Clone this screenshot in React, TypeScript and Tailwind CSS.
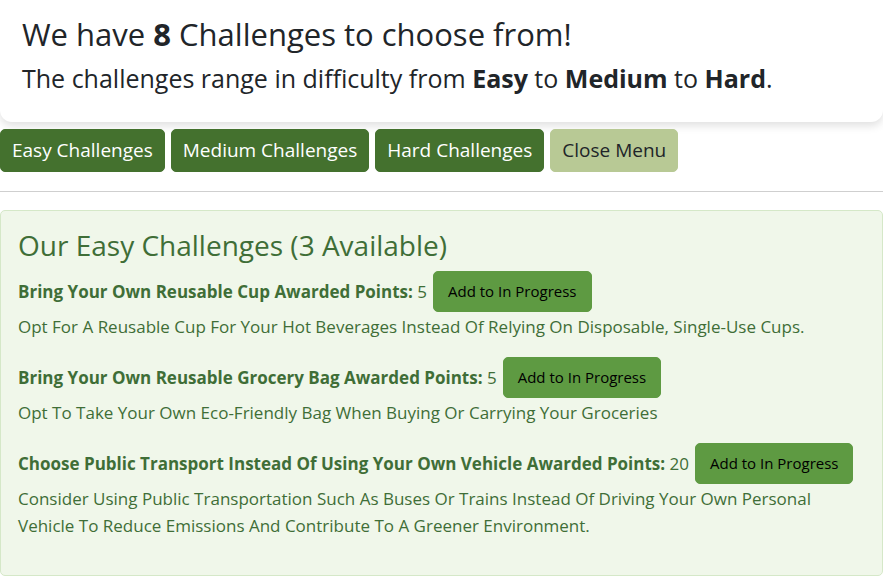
const challenges = [
  {
    title: "Bring Your Own Reusable Cup",
    points: 5,
    desc: "Opt For A Reusable Cup For Your Hot Beverages Instead Of Relying On Disposable, Single-Use Cups.",
  },
  {
    title: "Bring Your Own Reusable Grocery Bag",
    points: 5,
    desc: "Opt To Take Your Own Eco-Friendly Bag When Buying Or Carrying Your Groceries",
  },
  {
    title: "Choose Public Transport Instead Of Using Your Own Vehicle",
    points: 20,
    desc: "Consider Using Public Transportation Such As Buses Or Trains Instead Of Driving Your Own Personal Vehicle To Reduce Emissions And Contribute To A Greener Environment.",
  },
];

export default function App() {
  return (
    <div className="min-h-screen bg-white font-['Open_Sans',sans-serif] text-[#212529]">
      <div className="bg-white rounded-b-xl shadow-[0_4px_8px_rgba(0,0,0,0.12)] px-[22px] pt-[16px] pb-[29px]">
        <h2 className="text-[31px] leading-[37px] font-medium mb-[10px]">
          We have <b className="font-bold">8</b> Challenges to choose from!
        </h2>
        <h4 className="text-[25px] leading-[30px] font-medium">
          The challenges range in difficulty from <b className="font-bold">Easy</b> to{" "}
          <b className="font-bold">Medium</b> to <b className="font-bold">Hard</b>.
        </h4>
      </div>

      <div className="flex gap-[6px] mt-[7px]">
        {["Easy Challenges", "Medium Challenges", "Hard Challenges"].map((t) => (
          <button
            key={t}
            className="bg-[#44712e] text-white text-[19px] leading-[29px] px-[11px] py-[6px] rounded-[5px] border border-[#44712e]"
          >
            {t}
          </button>
        ))}
        <button className="bg-[#b8c995] text-[#212529] text-[19px] leading-[29px] px-[11px] py-[6px] rounded-[5px] border border-[#b8c995]">
          Close Menu
        </button>
      </div>

      <hr className="mt-[19px] mb-[18px] border-t border-[#cfcfcf]" />

      <div className="bg-[#f0f7ea] border border-[#d5e8c8] rounded-[5px] px-[17px] pt-[17px] pb-[36px] text-[#3f6e37]">
        <h3 className="text-[28px] leading-[34px] font-medium mb-[9px]">Our Easy Challenges (3 Available)</h3>
        {challenges.map((c, i) => (
          <div key={i} className={i > 0 ? "mt-[17px]" : ""}>
            <div className="flex items-center text-[17px]">
              <span>
                <b className="font-bold">{c.title} Awarded Points:</b> {c.points}
              </span>
              <button className="ml-[6px] bg-[#5e9a42] text-black text-[15px] leading-[25px] px-[14px] py-[7px] rounded-[5px] border border-[#5e9a42]">
                Add to In Progress
              </button>
            </div>
            <p className="text-[17px] leading-[27px] mt-[1px]">{c.desc}</p>
          </div>
        ))}
      </div>
    </div>
  );
}
